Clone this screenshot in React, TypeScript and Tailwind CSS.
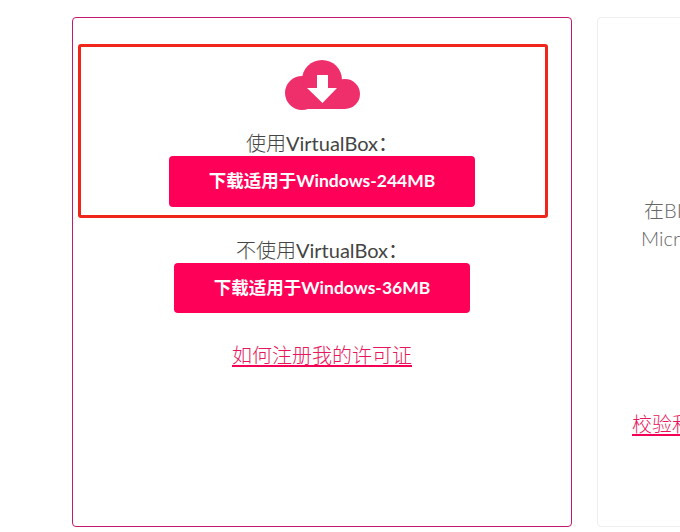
import React from 'react'

const font = "font-['Lato','Noto_Sans_CJK_SC',sans-serif]"

function CloudIcon() {
  return (
    <svg className="mt-[13px] h-[50px] w-[75px]" viewBox="0 0 75 50">
      <g fill="#ee2f6b">
        <circle cx="17" cy="33" r="17" />
        <circle cx="37" cy="20" r="20" />
        <circle cx="60" cy="34" r="15" />
        <rect x="17" y="30" width="43" height="19" />
      </g>
      <path d="M32 15h11v13h9L37.5 43 22 28h10z" fill="#fff" />
    </svg>
  )
}

function DownloadButton({ label }: { label: string }) {
  return (
    <a className="flex h-[50px] items-center justify-center rounded bg-[#ff0058] px-10 text-[17.5px] font-bold text-white whitespace-nowrap">
      {label}
    </a>
  )
}

export default function App() {
  return (
    <div className={`${font} flex h-[532px] w-[680px] gap-[25px] overflow-hidden bg-white pl-[72px] pt-[17px]`}>
      <div className="flex h-[510px] w-[500px] shrink-0 flex-col rounded border border-[#c2186f] pl-[5px] pt-[26px]">
        <div className="flex h-[174px] w-[470px] flex-col items-center rounded-[3px] border-[3px] border-[#f0261c] pl-[18px]">
          <CloudIcon />
          <p className="mt-[21px] text-[20px] leading-[24px] text-[#444]">
            <span className="font-light">使用</span>VirtualBox：
          </p>
          <div className="mt-[1px] h-[51px] w-[306px]">
            <a className="flex h-full items-center justify-center rounded bg-[#ff0058] text-[17.5px] font-bold text-white">
              下载适用于Windows-244MB
            </a>
          </div>
        </div>
        <div className="mr-[5px] flex flex-col items-center">
          <p className="mt-[20px] text-[20px] leading-[24px] text-[#444]">
            <span className="font-light">不使用</span>VirtualBox：
          </p>
          <div className="mt-[1px] w-[296px]">
            <DownloadButton label="下载适用于Windows-36MB" />
          </div>
          <a className="mt-[29px] text-[20px] leading-[26px] font-light text-[#e8175d] underline decoration-[#f50057] decoration-2 underline-offset-2">
            如何注册我的许可证
          </a>
        </div>
      </div>

      <div className="h-[510px] w-[500px] shrink-0 rounded border border-[#eeeeee] text-[20px] font-light text-[#666]">
        <p className="mt-[178px] pl-[46px] leading-[28px] whitespace-nowrap">在BIOS中启用虚拟化</p>
        <p className="pl-[43px] leading-[28px] whitespace-nowrap">Microsoft Windows</p>
        <a className="mt-[159px] block pl-[34px] leading-[26px] whitespace-nowrap text-[#e8175d] underline decoration-[#f50057] decoration-2 underline-offset-2">
          校验和
        </a>
      </div>
    </div>
  )
}
